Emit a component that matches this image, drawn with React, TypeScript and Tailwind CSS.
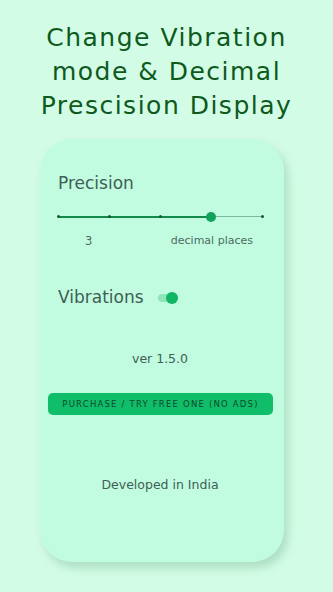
export default function App() {
  const ticks = [0, 25, 50, 75, 100];
  return (
    <div
      className="w-[333px] h-[592px] bg-[#d3fce6] flex flex-col overflow-hidden"
      style={{ fontFamily: '"DejaVu Sans", sans-serif' }}
    >
      <h1 className="mt-[21px] text-center text-[#0d5a1c] text-[25px] leading-[34px] tracking-[1.5px] font-normal">
        Change Vibration
        <br />
        mode &amp; Decimal
        <br />
        Prescision Display
      </h1>

      <div className="mt-[16px] ml-[40px] w-[244px] h-[423px] bg-[#c1fce1] rounded-[32px] shadow-[4px_6px_10px_rgba(60,140,100,0.25)] flex flex-col pl-[18px] pr-[22px]">
        <div className="mt-[32px] text-[17px] text-[#3f5e55]">Precision</div>

        <div className="relative mt-[14px] h-[12px]">
          <div className="absolute left-0 right-0 top-[5px] h-[1px] bg-[#7fb79a]" />
          <div className="absolute left-0 w-[75%] top-[5px] h-[2px] bg-[#118a4c]" />
          {ticks.map((t) => (
            <div
              key={t}
              className="absolute top-[4px] w-[3px] h-[3px] rounded-full bg-[#0f5a35]"
              style={{ left: `calc(${t}% - 1.5px)` }}
            />
          ))}
          <div className="absolute top-[1px] left-[calc(75%-5px)] w-[10px] h-[10px] rounded-full bg-[#12a25c]" />
        </div>

        <div className="mt-[10px] flex items-center text-[11px] text-[#4d6a60]">
          <span className="ml-[27px] text-[11.5px]">3</span>
          <span className="ml-auto mr-[9px]">decimal places</span>
        </div>

        <div className="mt-[35px] flex items-center">
          <span className="text-[17px] text-[#3f5e55]">Vibrations</span>
          <div className="relative ml-[14px] w-[20px] h-[12px] flex items-center">
            <div className="w-[18px] h-[8px] rounded-full bg-[#8fe4b8]" />
            <div className="absolute right-0 w-[12px] h-[12px] rounded-full bg-[#10b565]" />
          </div>
        </div>

        <div className="mt-[40px] text-center text-[12.5px] text-[#3f5e55]">ver 1.5.0</div>

        <div className="mt-[24px] -ml-[10px] -mr-[11px] h-[22px] rounded-[5px] bg-[#10bd69] flex items-center justify-center text-[8.5px] tracking-[1.2px] text-[#0d4b2c]">
          PURCHASE / TRY FREE ONE (NO ADS)
        </div>

        <div className="mt-[61px] text-center text-[12.5px] text-[#3f5e55]">Developed in India</div>
      </div>
    </div>
  );
}
